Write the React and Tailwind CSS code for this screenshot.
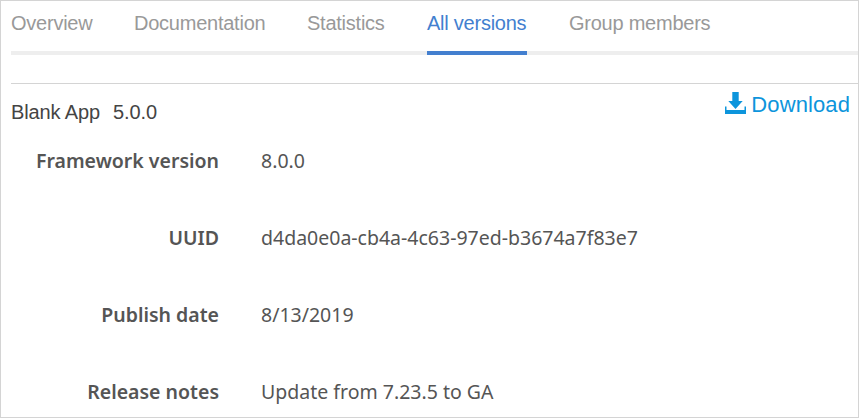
const tabs = [
  { label: 'Overview', width: 'w-[82px]' },
  { label: 'Documentation', width: 'w-[132px]' },
  { label: 'Statistics', width: 'w-[79px]' },
  { label: 'All versions', width: 'w-[100px]', active: true },
  { label: 'Group members', width: 'w-[143px] pl-px' },
];

const details = [
  ['Framework version', '8.0.0'],
  ['UUID', 'd4da0e0a-cb4a-4c63-97ed-b3674a7f83e7'],
  ['Publish date', '8/13/2019'],
  ['Release notes', 'Update from 7.23.5 to GA'],
];

function DownloadIcon() {
  return (
    <svg className="h-[22px] w-[22px] shrink-0" viewBox="0 0 22 22" fill="currentColor" aria-hidden="true">
      <path d="M7.3 0h6.4v9h4L10.5 17 3.3 9h4z" />
      <path d="M0 14.5h1.5V18h18v-3.5H21V22H0z" />
    </svg>
  );
}

export default function App() {
  return (
    <main className="h-[418px] w-[859px] overflow-hidden border border-[#d4d4d4] bg-white pl-[10px] font-['Liberation_Sans',Arial,sans-serif]">
      <nav className="flex h-[54px] gap-[41px] border-b-4 border-[#eeeeee] text-xl tracking-[-0.24px]">
        {tabs.map((tab) => (
          <a
            key={tab.label}
            className={`h-[54px] shrink-0 pt-[7px] leading-[30px] whitespace-nowrap ${tab.width} ${
              tab.active ? 'border-b-4 border-[#437fcf] text-[#437fcf]' : 'text-[#999999]'
            }`}
          >
            {tab.label}
          </a>
        ))}
      </nav>
      <section className="mt-7 border-t border-[#d4d4d4]">
        <header className="flex h-[49px] items-start justify-between pr-2">
          <h1 className="flex gap-[13px] pt-[13px] text-xl leading-[30px] tracking-[-0.12px] text-[#444444]">
            <span>Blank App</span>
            <span>5.0.0</span>
          </h1>
          <a className="flex gap-1 pt-2 text-[#0d95dc]">
            <DownloadIcon />
            <span className="text-[22px] leading-[26px] tracking-[0.1px]">Download</span>
          </a>
        </header>
        <dl className="font-['Noto_Sans',sans-serif] text-[19.5px] leading-[30px] text-[#555555]">
          {details.map(([label, value]) => (
            <div key={label} className="flex h-[77px] pt-[13px]">
              <dt className="w-[208px] shrink-0 text-right font-semibold">{label}</dt>
              <dd className="pl-[42px] whitespace-nowrap">{value}</dd>
            </div>
          ))}
        </dl>
      </section>
    </main>
  );
}
